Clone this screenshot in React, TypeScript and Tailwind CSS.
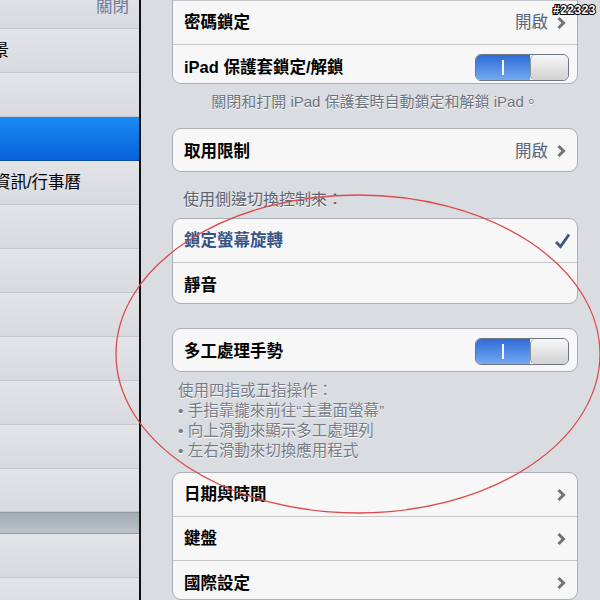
import React from 'react';

const font = { fontFamily: '"Liberation Sans", "Noto Sans CJK TC", sans-serif' };

const Chevron = () => (
  <svg width="10" height="14" viewBox="0 0 10 14" className="shrink-0">
    <path d="M2.5 2 L7.5 7 L2.5 12" fill="none" stroke="#727272" strokeWidth="3" />
  </svg>
);

const Check = () => (
  <svg width="17" height="16" viewBox="0 0 17 16">
    <path d="M2 9 L6.5 13.5 L15 1.5" fill="none" stroke="#3b5584" strokeWidth="2.8" />
  </svg>
);

const Switch = () => (
  <div className="flex h-[27px] w-[94px] overflow-hidden rounded-[6px] border border-[#6f7784]">
    <div className="flex w-[54px] items-center justify-center bg-linear-to-b from-[#2e6bd6] to-[#74a9f1]">
      <div className="h-[15px] w-[2px] bg-white" />
    </div>
    <div className="flex-1 rounded-[5px] border-l border-[#8b9097] bg-linear-to-b from-[#f7f7f7] to-[#d2d2d2]" />
  </div>
);

type Row = { label: string; value?: string; blue?: boolean; right?: 'chevron' | 'switch' | 'check' | 'none' };

const Card: React.FC<{ rows: Row[]; className?: string }> = ({ rows, className = '' }) => (
  <div className={`overflow-hidden rounded-[9px] border border-[#acaeb3] bg-[#f7f7f7] ${className}`}>
    {rows.map((r, i) => (
      <div
        key={i}
        className={`flex h-[44px] items-center justify-between pl-[11px] ${
          i < rows.length - 1 ? 'border-b border-[#c6c6c8]' : ''
        } ${r.right === 'switch' ? 'pr-[8px]' : r.right === 'check' ? 'pr-[6px]' : 'pr-[11px]'}`}
      >
        <span className={`text-[16.5px] font-bold ${r.blue ? 'text-[#385487]' : 'text-black'}`}>{r.label}</span>
        <div className="flex items-center gap-[8px]">
          {r.value && <span className="text-[16.5px] text-[#56657f]">{r.value}</span>}
          {r.right === 'chevron' && <Chevron />}
          {r.right === 'switch' && <Switch />}
          {r.right === 'check' && <Check />}
        </div>
      </div>
    ))}
  </div>
);

const SideRow: React.FC<{ label?: string; end?: number; value?: string; selected?: boolean; h?: string }> = ({
  label,
  end,
  value,
  selected,
  h = 'h-[44px]',
}) => (
  <div
    className={`relative flex ${h} items-center border-b ${
      selected
        ? 'border-[#0a4fb8] bg-linear-to-b from-[#1b8cf4] to-[#0a60d9]'
        : 'border-[#c5c7cc] bg-linear-to-b from-[#e3e4e8] to-[#d8dadf]'
    }`}
  >
    {label && (
      <div className="flex justify-end whitespace-nowrap text-[16.5px] text-black" style={{ width: end }}>
        {label}
      </div>
    )}
    {value && <span className="absolute right-[10px] text-[16.5px] text-[#6a7c9c]">{value}</span>}
  </div>
);

export default function App() {
  return (
    <div className="relative flex h-[600px] w-[600px] overflow-hidden bg-[#d9dce1]" style={font}>
      {/* sidebar */}
      <div className="flex w-[139px] shrink-0 flex-col overflow-hidden">
        <div className="-mt-[15px] flex flex-col">
          <SideRow label="定位服務" end={0} value="關閉" />
          <SideRow label="亮度與背景" end={9} />
          <SideRow />
          <SideRow selected />
          <SideRow label="郵件、聯絡資訊/行事曆" end={81} />
          <SideRow />
          <SideRow />
          <SideRow />
          <SideRow />
          <SideRow />
          <SideRow />
          <SideRow h="h-[43px]" />
          <div className="h-[22px] border-b border-t border-[#8f989f] bg-linear-to-b from-[#a3acb4] to-[#bcc3c9]" />
          <SideRow />
          <SideRow />
        </div>
      </div>
      <div className="w-[2px] shrink-0 bg-[#111]" />

      {/* detail */}
      <div className="flex flex-1 flex-col pl-[31px] pr-[22px]">
        <Card
          className="-mt-[44px]"
          rows={[
            { label: '自動鎖定', value: '2 分鐘', right: 'chevron' },
            { label: '密碼鎖定', value: '開啟', right: 'chevron' },
            { label: 'iPad 保護套鎖定/解鎖', right: 'switch' },
          ]}
        />
        <p className="mt-[8px] text-center text-[15px] leading-[20px] text-[#6c727e] [text-shadow:0_1px_0_#fff]">
          關閉和打開 iPad 保護套時自動鎖定和解鎖 iPad。
        </p>
        <Card className="mt-[16px]" rows={[{ label: '取用限制', value: '開啟', right: 'chevron' }]} />
        <p className="mt-[18px] pl-[11px] text-[16px] leading-[20px] text-[#5b6270] [text-shadow:0_1px_0_#fff]">
          使用側邊切換控制來：
        </p>
        <Card
          className="mt-[8px]"
          rows={[
            { label: '鎖定螢幕旋轉', blue: true, right: 'check' },
            { label: '靜音', right: 'none' },
          ]}
        />
        <Card className="mt-[24px]" rows={[{ label: '多工處理手勢', right: 'switch' }]} />
        <div className="mt-[9px] pl-[6px] text-[15.5px] leading-[20px] text-[#767b86] [text-shadow:0_1px_0_#fff]">
          <p>使用四指或五指操作：</p>
          <p>• 手指靠攏來前往“主畫面螢幕”</p>
          <p>• 向上滑動來顯示多工處理列</p>
          <p>• 左右滑動來切換應用程式</p>
        </div>
        <Card
          className="mt-[11px]"
          rows={[
            { label: '日期與時間', right: 'chevron' },
            { label: '鍵盤', right: 'chevron' },
            { label: '國際設定', right: 'chevron' },
          ]}
        />
      </div>

      {/* annotation overlay */}
      <svg className="pointer-events-none absolute left-0 top-0" width="600" height="600">
        <ellipse cx="358" cy="354" rx="242" ry="159" fill="none" stroke="#de4a4a" strokeWidth="1.3" />
      </svg>
      <span className="absolute right-[4px] top-[1px] text-[12px] font-bold tracking-[0.5px] text-white [-webkit-text-stroke:2px_black] [paint-order:stroke_fill]">
        #22323
      </span>
    </div>
  );
}
